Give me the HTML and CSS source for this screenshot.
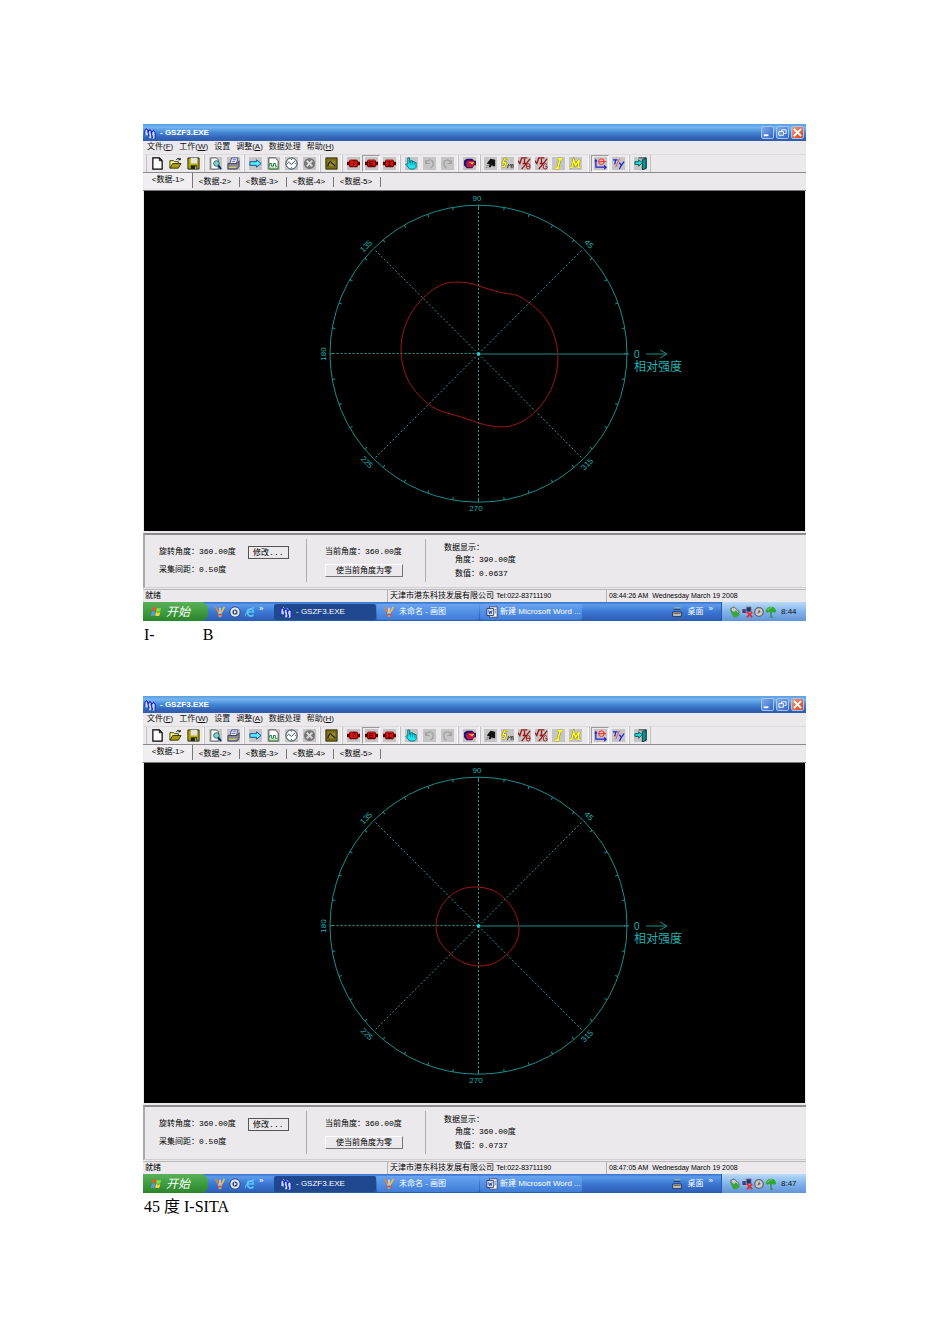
FILE: index.html
```html
<!DOCTYPE html>
<html lang="zh-CN">
<head>
  <meta charset="UTF-8" />
  <meta name="viewport" content="width=device-width, initial-scale=1.0"/>
  <title>GSZF3 I-SITA</title>
  <link rel="stylesheet" href="styles.css">
</head>
<body>
  <svg class="sprite" aria-hidden="true">
    <symbol id="app" viewBox="0 0 14 14"><path d="M1 9V4l3-3 2 3 2-2 2 2 3 1v8l-3 1V9l-2 4H6V8L4 10z" fill="#c4dcff"/><path d="M1 9V4l2-2 2 2v5M4 4l2 7M5 5l2-2 2 2v6M8 5l2 8M9 6l2-2 2 2v8" fill="none" stroke="#1420c8" stroke-width="1.2"/></symbol>
    <symbol id="new" viewBox="0 0 14 14"><path d="M2 1h7l3 3v9H2z" fill="#fff" stroke="#000" stroke-width="1.3"/><path d="M9 1v3h3" fill="none" stroke="#000"/></symbol>
    <symbol id="open" viewBox="0 0 14 14"><path d="M1 12V4h4l1 1h4v3" fill="#ffff8a" stroke="#330"/><path d="M1 12l3-5h9l-3 5z" fill="#a99b16" stroke="#330"/><path d="M8 3c1-2 3-2 4 0m0-2v2h-2" fill="none" stroke="#000"/></symbol>
    <symbol id="save" viewBox="0 0 14 14"><path d="M1 1h12v12H1z" fill="#b5ab00" stroke="#221"/><path d="M4 1h7v6H4z" fill="#e4e2e0"/><path d="M4 9h7v4H4z" fill="#221"/><path d="M9 10h1v3H9z" fill="#eee"/></symbol>
    <symbol id="preview" viewBox="0 0 14 14"><path d="M2 1h6l2 2v10H2z" fill="#fff" stroke="#555"/><circle cx="8" cy="7" r="3" fill="#8cc" stroke="#266"/><path d="M10 9l3 4" stroke="#036" stroke-width="2"/></symbol>
    <symbol id="print" viewBox="0 0 14 14"><path d="M5 1h7l-2 6H3z" fill="#fff" stroke="#448"/><path d="M1 7h10l2-3v6l-2 3H1z" fill="#889" stroke="#445"/><path d="M2 11h8" stroke="#ee6"/><path d="M6 3h4M5 5h4" stroke="#55a"/></symbol>
    <symbol id="go" viewBox="0 0 14 14"><path d="M1 5h7V3l5 4-5 4V9H1z" fill="#5ef" stroke="#124b9c"/></symbol>
    <symbol id="chart" viewBox="0 0 14 14"><path d="M2 1h7l3 3v9H2z" fill="#fff" stroke="#444"/><path d="M3 10V7h2v3h2V7h2v3h2" fill="none" stroke="#173"/><path d="M2 12h11" stroke="#3a3"/></symbol>
    <symbol id="clock" viewBox="0 0 14 14"><circle cx="7" cy="7" r="6" fill="#fff" stroke="#234"/><path d="M3 5l4 3 4-4M7 2v1M7 11v1M2 7h1M11 7h1" fill="none" stroke="#246"/></symbol>
    <symbol id="stop" viewBox="0 0 14 14"><circle cx="7" cy="7" r="6" fill="#777"/><path d="M4 4l6 6M10 4l-6 6" stroke="#ddd" stroke-width="2"/></symbol>
    <symbol id="scope" viewBox="0 0 14 14"><path d="M1 1h12v12H1z" fill="#776d12" stroke="#332f00"/><path d="M3 4h8v6H3z" fill="#9a8d35"/><path d="M3 10c1-5 3-6 4-4s2 1 4 4" fill="none" stroke="#220" stroke-width="1.3"/></symbol>
    <symbol id="motor" viewBox="0 0 14 14"><path d="M3 3h8l1 2h2v4h-2l-1 2H3L2 9H0V5h2z" fill="#500"/><path d="M4 3h6l1 2v4l-1 1H4L3 9V5z" fill="#dd1010"/></symbol>
    <symbol id="motor1" viewBox="0 0 14 14"><use href="#motor"/><path d="M6 4h3l-1 2-1 1v2" fill="none" stroke="#400"/></symbol>
    <symbol id="motor2" viewBox="0 0 14 14"><use href="#motor"/><path d="M9 5H5v4h4M5 7h3" fill="none" stroke="#400"/></symbol>
    <symbol id="motor3" viewBox="0 0 14 14"><use href="#motor"/><path d="M5 5h4M5 9h4M7 5v4" fill="none" stroke="#400"/></symbol>
    <symbol id="hand" viewBox="0 0 14 14"><path d="M3 1h2v5h1V4h2v2V5h2v1h2v5l-2 2H5L1 8l1-1 1 1z" fill="#20e6ee" stroke="#087080"/><path d="M6 6v3M8 6v3M10 6v3" stroke="#087080" stroke-width=".6"/></symbol>
    <symbol id="undo" viewBox="0 0 14 14"><path d="M3 3v4h4M3 7c3-6 8-4 8 0 0 2-1 4-3 5" fill="none" stroke="#a0a0a0" stroke-width="1.3"/></symbol>
    <symbol id="redo" viewBox="0 0 14 14"><path d="M11 3v4H7M11 7C8 1 3 3 3 7c0 2 1 4 3 5" fill="none" stroke="#a0a0a0" stroke-width="1.3"/></symbol>
    <symbol id="palette" viewBox="0 0 14 14"><path d="M4 2h6l2 2h2v5h-2l-2 3H4L1 9V4z" fill="#20116f"/><path d="M5 4h6l2 3-3 4H5L3 7z" fill="#d12"/><path d="M6 5l3 1 3-1-2 3z" fill="#fd4"/><path d="M4 5l4 5" stroke="#43f"/></symbol>
    <symbol id="motion" viewBox="0 0 14 14"><path d="M3 7l4-5 5 1v7H9V8l-2 3H5l1-3z" fill="#111"/><path d="M2 11h2M3 9h2" stroke="#777"/></symbol>
    <symbol id="sm" viewBox="0 0 14 14"><path d="M7 2H4L2 6h3l-1 4H1" fill="none" stroke="#777020" stroke-width="2.2"/><path d="M7 2H4L2 6h3l-1 4H1" fill="none" stroke="#ff2" stroke-width="1.4"/><path d="M7 12l1-4 1 1 2-1v4m0-3l2-1v4" fill="none" stroke="#332"/></symbol>
    <symbol id="root" viewBox="0 0 14 14"><path d="M0 4l2 3 2-6h6M7 2v5M5 7h4M13 2L4 13" fill="none" stroke="#9c1616" stroke-width="1.4"/></symbol>
    <symbol id="root1" viewBox="0 0 14 14"><use href="#root"/><ellipse cx="11" cy="10" rx="2" ry="3" fill="none" stroke="#9c1616"/><path d="M9 10h4" stroke="#9c1616"/></symbol>
    <symbol id="root2" viewBox="0 0 14 14"><use href="#root"/><path d="M13 8l-2-1-2 2v3l2 1 2-1v-2h-2" fill="none" stroke="#9c1616"/></symbol>
    <symbol id="int" viewBox="0 0 14 14"><path d="M6 2h5M9 2L6 12M3 12h5" fill="none" stroke="#777020" stroke-width="2.6"/><path d="M6 2h5M9 2L6 12M3 12h5" fill="none" stroke="#ff2" stroke-width="1.8"/></symbol>
    <symbol id="mod" viewBox="0 0 14 14"><path d="M1 11h3M3 11l2-8 2 6 4-6-1 8M9 11h3" fill="none" stroke="#777020" stroke-width="2.4"/><path d="M1 11h3M3 11l2-8 2 6 4-6-1 8M9 11h3" fill="none" stroke="#ff2" stroke-width="1.6"/></symbol>
    <symbol id="polar" viewBox="0 0 14 14"><path d="M2 3v8h11M1 5l1-2 1 2M11 9l2 2-2 2" fill="none" stroke="#22c" stroke-width="1.3"/><circle cx="8" cy="5" r="3" fill="#f7baba" stroke="#e22"/><path d="M5 5h8" stroke="#e22"/></symbol>
    <symbol id="ty" viewBox="0 0 14 14"><path d="M1 3h5M4 3L3 8M8 6l2 3 3-4M10 9l-2 4" fill="none" stroke="#22c" stroke-width="1.3"/><path d="M8 2L4 11" stroke="#d44"/></symbol>
    <symbol id="exit" viewBox="0 0 14 14"><path d="M5 1h8v11h-3" fill="none" stroke="#133"/><path d="M9 3l4-2v11l-4 2z" fill="#099" stroke="#133"/><path d="M1 5h4V3l4 3-4 4V8H1z" fill="#2dd" stroke="#155"/></symbol>

    <symbol id="flag" viewBox="0 0 14 14"><path d="M3 2c2-1 3-1 4 0L6 6c-1-1-3-1-4 0z" fill="#f0532a"/><path d="M8 2c2 1 3 1 5 0l-1 4c-2 1-3 1-5 0z" fill="#8cdc43"/><path d="M2 7c1-1 3-1 4 0l-1 5c-1-1-3-1-4 0z" fill="#5599f5"/><path d="M7 7c2 1 3 1 5 0l-1 4c-2 1-3 1-5 0z" fill="#ffd736"/></symbol>
    <symbol id="paint" viewBox="0 0 14 14"><path d="M4 6h6l-1 7H5z" fill="#b8c7cf" stroke="#667"/><path d="M5 7L2 1" stroke="#e8842c" stroke-width="2"/><path d="M7 7V2" stroke="#eee" stroke-width="1.5"/><path d="M9 7l3-6" stroke="#fb3" stroke-width="2"/><path d="M5 10h4" stroke="#d43" stroke-width="2"/></symbol>
    <symbol id="player" viewBox="0 0 14 14"><circle cx="7" cy="7" r="6" fill="#dce8f4" stroke="#237"/><circle cx="7" cy="7" r="3" fill="#346"/><path d="M6 5l3 2-3 2z" fill="#fff"/></symbol>
    <symbol id="ie" viewBox="0 0 14 14"><path d="M11 10c-2 3-7 2-7-3 0-4 7-5 7 0H4" fill="none" stroke="#52c5fa" stroke-width="2"/><path d="M2 12C0 9 7 2 12 2" fill="none" stroke="#7cc8f8"/></symbol>
    <symbol id="word" viewBox="0 0 14 14"><path d="M4 1h9v12H4z" fill="#fff" stroke="#446"/><path d="M1 3h8v8H1z" fill="#dfe9fb" stroke="#235"/><path d="M3 5l1 4 1-3 1 3 1-4" fill="none" stroke="#23a"/><path d="M10 4h2M10 6h2M10 8h2" stroke="#668"/></symbol>
    <symbol id="keyboard" viewBox="0 0 14 14"><path d="M2 7h10v5H2z" fill="#ddd" stroke="#222"/><path d="M3 9h8M3 4h8" stroke="#333"/><path d="M4 2h7" stroke="#9bc"/></symbol>
    <symbol id="usb" viewBox="0 0 14 14"><path d="M2 3l4-2 6 6-3 5-5-3z" fill="#ccc" stroke="#555"/><path d="M1 4l5 3 2-2 5 5-4 3H5z" fill="#3ba53b"/></symbol>
    <symbol id="net" viewBox="0 0 14 14"><path d="M1 3h6v6H1z" fill="#348" stroke="#ccd"/><path d="M6 1h6v6H6z" fill="#236" stroke="#99b"/><path d="M7 7l6 6M13 7l-6 6" stroke="#e22" stroke-width="2"/></symbol>
    <symbol id="sound" viewBox="0 0 14 14"><circle cx="7" cy="7" r="5" fill="#ccc" stroke="#666" stroke-width="1.5"/><path d="M5 9l2-5 2 3z" fill="#666"/></symbol>
    <symbol id="umbrella" viewBox="0 0 14 14"><path d="M1 7C1 3 4 1 7 1s6 2 6 6l-2 1-2-1-2 1-2-1-2 1z" fill="#2fa836"/><path d="M3 5c1-2 3-3 5-3" fill="none" stroke="#9be07e"/><path d="M7 7v6h2" fill="none" stroke="#2c8c34" stroke-width="1.5"/></symbol>

    <!-- polar grid: outer circle, a tick every 10 degrees, dashed radii every 45 -->
    <symbol id="grid" viewBox="0 0 661 340">
      <g class="grid-lines">
        <circle cx="334.5" cy="162.7" r="148.5"/>
        <circle cx="334.5" cy="162.7" r="147" stroke-width="3" pathLength="360" stroke-dasharray="0.4 9.6" stroke-dashoffset="0.2"/>
        <path class="radii" d="M334.5 163V14M334.5 163V311M334.5 162.5H186M334.5 163L438 59M334.5 163L231 59M334.5 163L231 267M334.5 163L438 267"/>
        <path d="M334 163H485"/>
        <path d="M502 163H522M516 159l7 4-7 4"/>
        <path class="centre" d="M333 163h3"/>
      </g>
    </symbol>
  </svg>

  <main class="page">
    <div data-screen="0"></div>
    <p class="caption">I-            B</p>
    <div data-screen="1"></div>
    <p class="caption">45 度 I-SITA</p>
  </main>

  <template id="screen">
    <section class="screen">
      <header class="title-bar">
        <svg class="icon"><use href="#app"/></svg>
        <span class="title">- GSZF3.EXE</span>
        <button class="win-btn" aria-label="最小化"><svg viewBox="0 0 12 12"><path d="M2 9h5" stroke-width="2"/></svg></button>
        <button class="win-btn" aria-label="还原"><svg viewBox="0 0 12 12"><path d="M5 5V3h5v4H8M2 5h5v4H2z"/></svg></button>
        <button class="win-btn close" aria-label="关闭"><svg viewBox="0 0 12 12"><path d="M2 2l8 8M10 2l-8 8" stroke-width="2"/></svg></button>
      </header>
      <nav class="menu">
        <a href="#">文件(<u>F</u>)</a><a href="#">工作(<u>W</u>)</a><a href="#">设置</a><a href="#">调整(<u>A</u>)</a><a href="#">数据处理</a><a href="#">帮助(<u>H</u>)</a>
      </nav>
      <div class="toolbar">
        <div class="group plain">
          <button aria-label="新建"><svg><use href="#new"/></svg></button>
          <button aria-label="打开"><svg><use href="#open"/></svg></button>
          <button aria-label="保存"><svg><use href="#save"/></svg></button>
        </div>
        <div class="group">
          <button aria-label="预览"><svg><use href="#preview"/></svg></button>
          <button aria-label="打印"><svg><use href="#print"/></svg></button>
        </div>
        <div class="group">
          <button aria-label="开始采集"><svg><use href="#go"/></svg></button>
          <button aria-label="图表"><svg><use href="#chart"/></svg></button>
          <button aria-label="定时"><svg><use href="#clock"/></svg></button>
          <button aria-label="停止"><svg><use href="#stop"/></svg></button>
        </div>
        <div class="group">
          <button aria-label="示波"><svg><use href="#scope"/></svg></button>
        </div>
        <div class="group">
          <button aria-label="电机 1"><svg><use href="#motor1"/></svg></button>
          <button class="pressed" aria-label="电机 2"><svg><use href="#motor2"/></svg></button>
          <button aria-label="电机 3"><svg><use href="#motor3"/></svg></button>
        </div>
        <div class="group">
          <button aria-label="手形"><svg><use href="#hand"/></svg></button>
          <button aria-label="撤销"><svg><use href="#undo"/></svg></button>
          <button aria-label="重做"><svg><use href="#redo"/></svg></button>
        </div>
        <div class="group">
          <button aria-label="颜色"><svg><use href="#palette"/></svg></button>
        </div>
        <div class="group tight">
          <button aria-label="转动"><svg><use href="#motion"/></svg></button>
          <button aria-label="Sm"><svg><use href="#sm"/></svg></button>
          <button aria-label="I/θ"><svg><use href="#root1"/></svg></button>
          <button aria-label="I/G"><svg><use href="#root2"/></svg></button>
          <button aria-label="I"><svg><use href="#int"/></svg></button>
          <button aria-label="M"><svg><use href="#mod"/></svg></button>
        </div>
        <div class="group">
          <button class="pressed" aria-label="极坐标"><svg><use href="#polar"/></svg></button>
          <button aria-label="T/y"><svg><use href="#ty"/></svg></button>
        </div>
        <div class="group">
          <button aria-label="退出"><svg><use href="#exit"/></svg></button>
        </div>
      </div>
      <div class="tabs">
        <button class="tab active">&lt;数据-1&gt;</button>
        <button class="tab">&lt;数据-2&gt;</button>
        <button class="tab">&lt;数据-3&gt;</button>
        <button class="tab">&lt;数据-4&gt;</button>
        <button class="tab">&lt;数据-5&gt;</button>
      </div>
      <svg class="plot" viewBox="0 0 661 340">
        <use href="#grid"/>
        <path class="curve" d=""/>
        <g class="angles">
          <text x="333" y="10">90</text>
          <text x="332" y="320">270</text>
          <text transform="translate(443 55) rotate(45)">45</text>
          <text transform="translate(224 57) rotate(-45)">135</text>
          <text transform="translate(182 163) rotate(-90)">180</text>
          <text transform="translate(221 273) rotate(45)">225</text>
          <text transform="translate(445 275) rotate(-45)">315</text>
        </g>
        <text class="zero" x="490" y="167">0</text>
        <text class="axis-name" x="490" y="180">相对强度</text>
      </svg>
      <div class="panel">
        <div class="cell">
          <div class="line"><span>旋转角度：360.00度</span><button class="btn default">修改...</button></div>
          <div class="line"><span>采集间距：0.50度</span></div>
        </div>
        <div class="cell">
          <div class="line"><span>当前角度：360.00度</span></div>
          <div class="line"><button class="btn wide">使当前角度为零</button></div>
        </div>
        <dl class="cell readout">
          <dt>数据显示：</dt>
          <dd>角度：<span class="angle"></span>度</dd>
          <dd>数值：<span class="value"></span></dd>
        </dl>
      </div>
      <div class="status">
        <span>就绪</span>
        <span>天津市港东科技发展有限公司 <small>Tel:022-83711190</small></span>
        <span><small><span class="time"></span> AM&nbsp; Wednesday March 19 2008</small></span>
      </div>
      <footer class="taskbar">
        <button class="start"><svg class="icon"><use href="#flag"/></svg>开始</button>
        <div class="quick">
          <svg class="icon"><use href="#paint"/></svg><svg class="icon"><use href="#player"/></svg><svg class="icon"><use href="#ie"/></svg><span class="more">»</span>
        </div>
        <button class="task current"><svg class="icon"><use href="#app"/></svg>- GSZF3.EXE</button>
        <button class="task"><svg class="icon"><use href="#paint"/></svg>未命名 - 画图</button>
        <button class="task"><svg class="icon"><use href="#word"/></svg>新建 Microsoft Word ...</button>
        <div class="desk"><svg class="icon"><use href="#keyboard"/></svg>桌面<span class="more">»</span></div>
        <div class="tray">
          <svg class="icon"><use href="#usb"/></svg><svg class="icon"><use href="#net"/></svg><svg class="icon"><use href="#sound"/></svg><svg class="icon"><use href="#umbrella"/></svg><time></time>
        </div>
      </footer>
    </section>
  </template>

  <script>
    const screens = [
      {
        angle: "390.00", value: "0.0637", time: "08:44:26", clock: "8:44",
        curve: "M414 166C413 142 403 124 385 112C378 106 374 104 367 103C360 103 347 99 335 95C325 91 312 90 303 92C292 95 284 102 279 107C265 121 257 139 257 158C257 180 266 198 283 212C289 217 295 220 303 222C314 225 324 228 335 232C344 235 352 236 360 236C372 235 383 229 392 220C406 206 414 187 414 166Z",
      },
      {
        angle: "360.00", value: "0.0737", time: "08:47:05", clock: "8:47",
        curve: "M375 167C375 155 370 145 361 136C353 128 344 124 331 124C321 124 313 127 306 133C297 141 292 152 292 163C292 175 298 184 307 191C315 199 324 203 337 203C346 203 355 199 363 191C371 184 375 176 375 167Z",
      },
    ];

    document.querySelectorAll("[data-screen]").forEach((slot) => {
      const data = screens[slot.dataset.screen];
      const node = document.getElementById("screen").content.cloneNode(true);
      node.querySelector(".curve").setAttribute("d", data.curve);
      node.querySelector(".angle").textContent = data.angle;
      node.querySelector(".value").textContent = data.value;
      node.querySelector(".time").textContent = data.time;
      node.querySelector("time").textContent = data.clock;
      slot.append(node);
    });
  </script>
</body>
</html>
```

FILE: styles.css
```css
* {
  box-sizing: border-box;
}
body {
  margin: 0;
  background: #fff;
  color: #000;
}
.sprite {
  display: block;
  width: 0;
  height: 0;
}
.page {
  padding: 124px 144px 0 143px;
}
.screen {
  background: #ebe9ec;
  font: 8px/12px "Liberation Sans", "Noto Sans CJK SC", sans-serif;
}
button {
  margin: 0;
  padding: 0;
  border: none;
  background: none;
  color: inherit;
  font: inherit;
  white-space: nowrap;
}
.icon {
  flex: none;
  width: 12px;
  height: 12px;
}

/* title bar and menu */
.title-bar {
  display: flex;
  align-items: center;
  gap: 2px;
  height: 17px;
  padding: 0 2px 0 1px;
  background: linear-gradient(#5a9fe0 0, #74b4f0 20%, #4488d4 50%, #3263b8 80%, #2f5cae);
  color: #fff;
}
.title {
  flex: 1;
  padding-left: 2px;
  font-weight: bold;
}
.win-btn {
  width: 13px;
  height: 13px;
  border: 1px solid #a5c4ee;
  border-radius: 2px;
  background: linear-gradient(135deg, #82acec, #3566c6);
}
.win-btn svg {
  display: block;
  width: 100%;
  fill: none;
  stroke: #fff;
}
.win-btn.close {
  background: linear-gradient(135deg, #f09a80, #d4451e);
}
.menu {
  display: flex;
  gap: 6px;
  height: 13px;
  padding: 0 4px;
  line-height: 11px;
}
.menu a {
  color: #111;
  text-decoration: none;
}

/* toolbar */
.toolbar {
  display: flex;
  height: 19px;
  padding: 0 3px;
  border-top: 1px solid #dcdadd;
  border-bottom: 1px solid #8c8a8c;
}
.group {
  display: flex;
  padding: 0 1px;
  border-left: 1px solid #c2c0c2;
  border-right: 1px solid #fff;
}
.group:last-child {
  border-right-color: #c2c0c2;
}
.group button {
  display: flex;
  align-items: center;
  justify-content: center;
  width: 18px;
  height: 17px;
}
.group.tight {
  padding-right: 4px;
}
.group.tight button {
  width: 17px;
}
.group svg {
  flex: none;
  width: 13px;
  height: 13px;
  background: #c6c5c6;
}
.group.plain svg {
  background: none;
}
.group .pressed {
  border: 1px solid;
  border-color: #999 #fff #fff #999;
}

/* tabs */
.tabs {
  display: flex;
  height: 18px;
  padding: 0 0 2px 1px;
  border-bottom: 1px solid #777;
}
.tab {
  width: 47px;
  height: 10px;
  margin-top: 4px;
  padding-right: 2px;
  border-right: 1px solid #777;
  line-height: 10px;
}
.tab.active {
  width: 49px;
  height: 15px;
  margin-top: 0;
  padding: 2px 0 3px;
  background: #f1eff2;
}

/* polar plot */
.plot {
  display: block;
  width: calc(100% - 2px);
  margin: 0 1px;
  background: #000;
}
.grid-lines {
  fill: none;
  stroke: #1d8c8c;
}
.radii {
  stroke: #2f9a9a;
  stroke-dasharray: 2 2;
}
.centre {
  stroke: #30c8c8;
  stroke-width: 3;
}
.curve {
  fill: none;
  stroke: #a01616;
}
.angles,
.zero,
.axis-name {
  fill: #22b0b0;
}
.angles {
  font: 8px "Liberation Sans", sans-serif;
  text-anchor: middle;
}
.zero {
  font-size: 10px;
}
.axis-name {
  font-size: 12px;
}

/* settings panel */
.panel {
  display: grid;
  grid-template-columns: 161px 119px 1fr;
  height: 55px;
  margin-top: 2px;
  padding: 4px 0 7px;
  border-top: 2px solid #8e8c8e;
  border-left: 2px solid #aaa8aa;
  border-bottom: 1px solid #cfcdcf;
  font-family: "Liberation Mono", "Noto Sans CJK SC", monospace;
}
.cell {
  margin: 0;
  padding: 4px 0 0 18px;
}
.cell + .cell {
  border-left: 1px solid #aeacae;
}
.line {
  display: flex;
  align-items: center;
  gap: 12px;
  height: 18px;
}
.cell:first-child {
  padding-left: 14px;
}
.btn {
  height: 13px;
  border: 1px solid;
  border-color: #fff #777 #777 #fff;
  line-height: 11px;
}
.btn.default {
  width: 41px;
  border-color: #555;
}
.btn.wide {
  width: 78px;
}
.readout {
  padding-top: 3px;
}
.readout dd {
  margin: 0 0 2px 11px;
}

/* status line */
.status {
  display: grid;
  grid-template-columns: 244px 219px 1fr;
  height: 13px;
  margin-top: 1px;
  border-top: 1px solid #b9b7b9;
}
.status > span {
  padding-left: 2px;
  white-space: nowrap;
}
.status > span + span {
  border-left: 1px solid #b5b3b5;
}
.status small {
  font-size: 7px;
}

/* taskbar */
.taskbar {
  display: flex;
  align-items: center;
  height: 19px;
  background: linear-gradient(#3a70c8, #5c9bea 15%, #3c78d4 50%, #2c5cb4);
  color: #fff;
}
.start {
  display: flex;
  align-items: center;
  gap: 4px;
  width: 65px;
  height: 19px;
  padding-left: 7px;
  border-radius: 0 7px 7px 0;
  background: linear-gradient(#5cb05c, #43a143 40%, #2b842b);
  font-size: 12px;
  font-style: italic;
}
.quick {
  display: flex;
  gap: 3px;
  width: 66px;
  padding-left: 6px;
}
.more {
  align-self: flex-start;
  line-height: 6px;
}
.task {
  display: flex;
  align-items: center;
  gap: 4px;
  width: 102px;
  height: 16px;
  margin-right: 1px;
  padding-left: 6px;
  border-radius: 2px;
  background: linear-gradient(#68a4f0, #3e7cd8);
}
.task:nth-of-type(4) {
  gap: 2px;
}
.task.current {
  background: #20488f;
}
.desk {
  display: flex;
  align-items: center;
  gap: 5px;
  margin-left: auto;
  padding-right: 8px;
}
.tray {
  display: flex;
  align-items: center;
  width: 85px;
  height: 19px;
  padding-left: 7px;
  border-left: 1px solid #2857ab;
  background: linear-gradient(#b9dbf8, #82b5ec 50%, #6293d8);
  color: #111;
}
.tray time {
  padding-left: 4px;
}

.caption {
  height: 75px;
  margin: 0;
  padding: 4px 1px;
  font: 16px/20px "Liberation Serif", "Noto Sans CJK SC", serif;
  white-space: pre;
}
```
